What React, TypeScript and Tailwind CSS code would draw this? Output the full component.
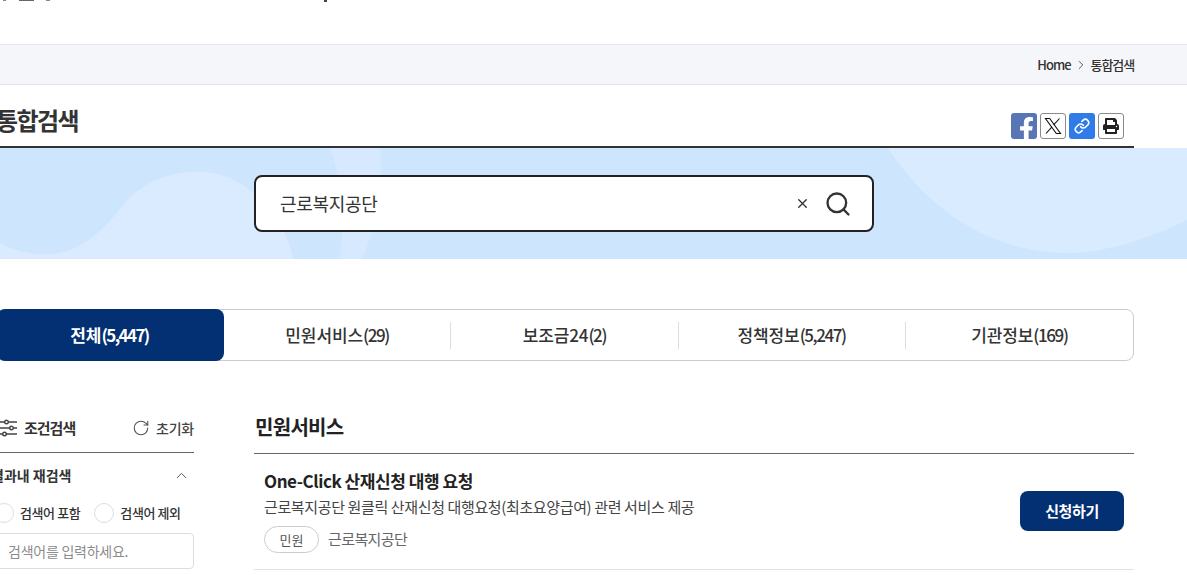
import { FaFacebookF, FaPrint } from "react-icons/fa";
import { ChevronRight, ChevronUp, Link, RotateCw, Search, X } from "lucide-react";

const font = "font-['Noto_Sans_CJK_KR','Noto_Sans',sans-serif]";

const tabs = [
  ["민원서비스", "(29)"],
  ["보조금24", "(2)"],
  ["정책정보", "(5,247)"],
  ["기관정보", "(169)"],
];

function FilterIcon() {
  return (
    <svg width="20" height="20" viewBox="0 0 20 20" fill="none" stroke="#444" strokeWidth="1.4">
      <path d="M1 4h6M10 4h9M1 10h11M15 10h4M1 16h4M8 16h11" />
      <circle cx="8.5" cy="4" r="1.8" />
      <circle cx="13.5" cy="10" r="1.8" />
      <circle cx="6.5" cy="16" r="1.8" />
    </svg>
  );
}

function XLogo() {
  return (
    <svg width="20" height="20" viewBox="0 0 20 20" fill="none" stroke="#111" strokeWidth="1.1">
      <path d="M2.5 2.5h4.2l10.8 15h-4.2z" />
      <path d="M16.5 2.5l-5.8 6.4M9 10.9l-6 6.6" />
    </svg>
  );
}

export default function App() {
  return (
    <div className={`${font} h-[575px] w-[1187px] overflow-hidden bg-white text-[#222]`}>
      <header className="flex h-[44px] items-start">
        <div className="ml-[3px] h-px w-[3px] bg-[#888]" />
        <div className="ml-[13px] h-px w-[15px] bg-[#666]" />
        <div className="ml-[12px] h-px w-[4px] bg-[#888]" />
        <div className="ml-[274px] h-[2px] w-[3px] bg-[#444]" />
      </header>

      <div className="h-[41px] border-y border-[#e4e6ee] bg-[#f5f6fa]">
        <div className="ml-[-4px] flex h-full w-[1138px] items-center justify-end gap-[3px] pt-px text-[13px] tracking-[-1px] text-[#333]">
          <span className="font-medium">Home</span>
          <ChevronRight size={14} strokeWidth={1.5} className="text-[#444]" />
          <span className="font-medium tracking-[-1.1px]">통합검색</span>
        </div>
      </div>

      <div className="ml-[-4px] flex h-[63px] w-[1138px] items-end justify-between border-b-2 border-[#333] pb-[9px]">
        <h1 className="text-[24px] font-bold leading-[34px] tracking-[-1.6px] text-[#333]">통합검색</h1>
        <div className="mb-[-2px] mr-[10px] flex gap-[3px]">
          <div className="flex h-[26px] w-[26px] items-end justify-center overflow-hidden rounded-[3px] bg-[#5876b6] text-white">
            <FaFacebookF size={24} className="mb-[-2px] ml-[5px]" />
          </div>
          <div className="flex h-[26px] w-[26px] items-center justify-center rounded-[3px] border border-[#8a8a8a] bg-white">
            <XLogo />
          </div>
          <div className="flex h-[26px] w-[26px] items-center justify-center rounded-[3px] bg-[#2f7be8] text-white">
            <Link size={16} strokeWidth={2.4} />
          </div>
          <div className="flex h-[26px] w-[26px] items-center justify-center rounded-[3px] border border-[#8a8a8a] bg-white text-[#222]">
            <FaPrint size={16} />
          </div>
        </div>
      </div>

      <section className="relative flex h-[111px] items-center overflow-hidden bg-[#cee5fe]">
        <svg className="absolute left-0 top-0" width="1187" height="111" viewBox="0 0 1187 111" fill="none">
          <path d="M0 95C18 105 50 112 75 100C100 88 112 70 125 55C145 32 175 22 205 24C250 28 285 70 293 111H0Z" fill="#dbebff" />
          <path d="M330 0H380C385 35 378 75 362 111H340C345 70 342 35 330 0Z" fill="#d6e9fe" />
          <path d="M888 0H1187V72C1140 95 1100 105 1065 105C995 105 930 65 888 0Z" fill="#d8ebff" />
        </svg>
        <div className="relative ml-[254px] flex h-[57px] w-[620px] items-center rounded-[8px] border-2 border-[#222] bg-white pl-[24px] pr-[21px]">
          <span className="flex-1 text-[18px] tracking-[-0.3px] text-[#333]">근로복지공단</span>
          <X size={15} strokeWidth={2.2} className="mr-[14px] text-[#333]" />
          <Search size={28} strokeWidth={2} className="mr-[-1px] text-[#333]" />
        </div>
      </section>

      <nav className="ml-[-4px] mt-[50px] flex h-[52px] w-[1138px] rounded-[8px] border border-[#ccc] text-[17px] font-medium tracking-[-0.1px] text-[#333]">
        <div className="my-[-1px] flex w-[227px] items-center justify-center rounded-[8px] bg-[#032f73] pr-[2px] font-bold text-white">
          전체<span className="tracking-[-1.6px]">(5,447)</span>
        </div>
        {tabs.map(([name, count], i) => (
          <div key={name} className="flex flex-1 items-center">
            <div className="flex flex-1 justify-center">
              {name}
              <span className="tracking-[-1.4px]">{count}</span>
            </div>
            {i < 3 && <div className="h-[27px] w-px bg-[#ddd]" />}
          </div>
        ))}
      </nav>

      <div className="ml-[-4px] mt-[48px] flex w-[1138px] gap-[60px]">
        <aside className="w-[198px] shrink-0">
          <div className="flex h-[44px] items-center justify-between border-b border-[#666] pb-[5px]">
            <div className="flex items-center gap-[6px] pl-[2px] text-[15px] font-bold tracking-[-1px] text-[#333]">
              <FilterIcon />
              조건검색
            </div>
            <div className="flex items-center gap-[6px] text-[14px] font-medium tracking-[-0.2px] text-[#444]">
              <RotateCw size={18} strokeWidth={1.5} className="text-[#555]" />
              초기화
            </div>
          </div>
          <div className="flex items-center justify-between pr-[4px] pt-[12px] text-[14px] font-bold leading-[20px] text-[#333]">
            <span className="ml-[-5px]">결과내 재검색</span>
            <ChevronUp size={17} strokeWidth={1.4} className="text-[#555]" />
          </div>
          <div className="ml-[-2px] mt-[18px] flex items-center text-[13px] font-medium leading-[20px] tracking-[-0.4px] text-[#333]">
            <span className="h-[20px] w-[20px] rounded-full border border-[#ddd]" />
            <span className="ml-[6px]">검색어 포함</span>
            <span className="ml-[14px] h-[20px] w-[20px] rounded-full border border-[#ddd]" />
            <span className="ml-[6px]">검색어 제외</span>
          </div>
          <div className="mt-[10px] flex h-[36px] items-center rounded-[4px] border border-[#ddd] pl-[11px] text-[14px] tracking-[-0.25px] text-[#8c8c8c]">
            검색어를 입력하세요.
          </div>
        </aside>

        <main className="flex-1">
          <div className="flex h-[45px] items-start border-b border-[#666] pb-[10px] text-[20px] font-bold leading-[34px] tracking-[-0.7px] text-[#222]">
            <span className="mt-[1px] pl-px">민원서비스</span>
          </div>
          <div className="flex h-[116px] items-start justify-between border-b border-[#e2e2e2] px-[10px] pt-[15px]">
            <div>
              <div className="text-[17px] font-bold leading-[24px] tracking-[-0.45px] text-[#222]">One-Click 산재신청 대행 요청</div>
              <div className="mt-[2px] text-[15px] leading-[24px] tracking-[-0.37px] text-[#444]">
                근로복지공단 원클릭 산재신청 대행요청(최초요양급여) 관련 서비스 제공
              </div>
              <div className="mt-[7px] flex items-center gap-[9px]">
                <span className="flex h-[27px] w-[55px] items-center justify-center rounded-full border border-[#ccc] text-[13px] text-[#555]">민원</span>
                <span className="text-[15px] tracking-[-0.6px] text-[#666]">근로복지공단</span>
              </div>
            </div>
            <div className="mt-[22px] flex h-[40px] w-[104px] items-center justify-center rounded-[8px] bg-[#032f73] text-[15px] font-bold tracking-[-0.4px] text-white">
              신청하기
            </div>
          </div>
        </main>
      </div>
    </div>
  );
}
